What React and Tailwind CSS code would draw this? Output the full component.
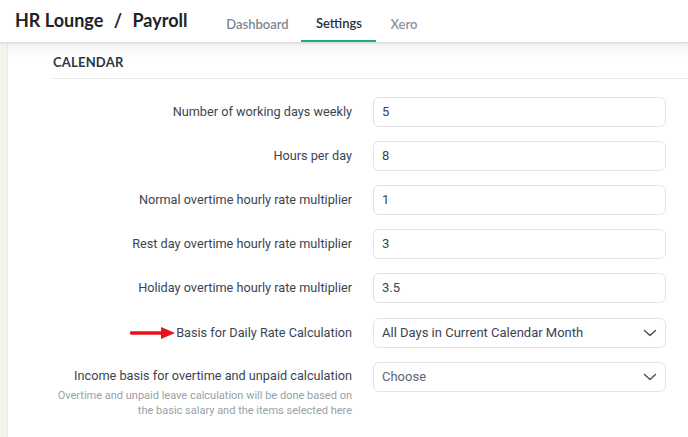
import React from "react";

const fields = [
  { label: "Number of working days weekly", value: "5" },
  { label: "Hours per day", value: "8" },
  { label: "Normal overtime hourly rate multiplier", value: "1" },
  { label: "Rest day overtime hourly rate multiplier", value: "3" },
  { label: "Holiday overtime hourly rate multiplier", value: "3.5" },
];

const Chevron = () => (
  <svg width="14" height="14" viewBox="0 0 14 14" fill="none">
    <path d="M1.5 4.5 L7 9.5 L12.5 4.5" stroke="#4a5361" strokeWidth="1.5" strokeLinecap="round" strokeLinejoin="round" />
  </svg>
);

const Arrow = () => (
  <svg width="46" height="14" viewBox="0 0 46 14">
    <path d="M1.5 7 H32" stroke="#e8131b" strokeWidth="3.4" strokeLinecap="round" />
    <path d="M31 1 L45 7 L31 13 Z" fill="#e8131b" />
  </svg>
);

const App = () => {
  return (
    <div className="w-[688px] h-[437px] overflow-hidden bg-white flex flex-col" style={{ fontFamily: "Roboto, sans-serif" }}>
      {/* Top bar */}
      <header className="h-[43px] shrink-0 bg-white border-b border-[#dcdcdc] flex items-end relative z-10 shadow-[0_1px_3px_rgba(0,0,0,0.08)]">
        <h1 className="pl-[15px] pb-[13px] text-[18px] font-bold text-[#1e2329] leading-none" style={{ fontFamily: "Lato, sans-serif" }}>
          HR Lounge <span className="px-[6px]">/</span> Payroll
        </h1>
        <nav className="ml-[26px] flex h-full items-end" style={{ fontFamily: "Lato, sans-serif" }}>
          <div className="w-[88px] h-full flex items-center justify-center pt-[8px] text-[13px] font-semibold text-[#7d8794]">Dashboard</div>
          <div className="w-[75px] h-full flex items-center justify-center pt-[8px] text-[13px] font-semibold text-[#2a303a] border-b-2 border-[#1fa987]">Settings</div>
          <div className="w-[55px] h-full flex items-center justify-center pt-[8px] text-[13px] font-semibold text-[#8a939e]">Xero</div>
        </nav>
      </header>

      <div className="flex flex-1">
        {/* Side strip */}
        <div className="w-[8px] bg-[#f6f3ef] border-r border-[#ebe7e2]" />

        <main className="flex-1 pl-[45px] bg-gradient-to-b from-[#f4f4f4] via-white to-white bg-[length:100%_30px] bg-no-repeat">
          <div className="border-b border-[#e6e6e6] h-[36px] flex items-center pt-[5px]">
            <h2 className="text-[13px] font-bold text-[#2c3645] tracking-[0.2px]" style={{ fontFamily: "Lato, sans-serif" }}>CALENDAR</h2>
          </div>

          <div className="pt-[18px] flex flex-col gap-[14px]">
            {fields.map((f) => (
              <div key={f.label} className="flex items-center">
                <label className="w-[299px] text-right text-[12.7px] text-[#3b4453]">{f.label}</label>
                <div className="ml-[21px] w-[293px] h-[30px] rounded-[6px] border border-[#e1e3e7] flex items-center px-[8px] text-[13px] text-[#3b4453]">
                  {f.value}
                </div>
              </div>
            ))}

            <div className="flex items-center mt-[1px]">
              <label className="w-[299px] flex items-center justify-end text-[12.7px] text-[#3b4453]">
                <Arrow />
                <span>Basis for Daily Rate Calculation</span>
              </label>
              <div className="ml-[21px] w-[293px] h-[30px] rounded-[6px] border border-[#e1e3e7] flex items-center justify-between pl-[8px] pr-[8px] text-[13px] text-[#3b4453]">
                All Days in Current Calendar Month
                <Chevron />
              </div>
            </div>

            <div className="flex items-start">
              <div className="w-[299px] text-right pt-[6px]">
                <div className="text-[12.7px] text-[#3b4453] leading-[16px]">Income basis for overtime and unpaid calculation</div>
                <div className="mt-[4px] text-[11px] text-[#989fa9] leading-[15px]">
                  Overtime and unpaid leave calculation will be done based on
                  <br />
                  the basic salary and the items selected here
                </div>
              </div>
              <div className="ml-[21px] w-[293px] h-[30px] rounded-[6px] border border-[#e1e3e7] flex items-center justify-between pl-[8px] pr-[8px] text-[13px] text-[#5d6572]">
                Choose
                <Chevron />
              </div>
            </div>
          </div>
        </main>
      </div>
    </div>
  );
};

export default App;
